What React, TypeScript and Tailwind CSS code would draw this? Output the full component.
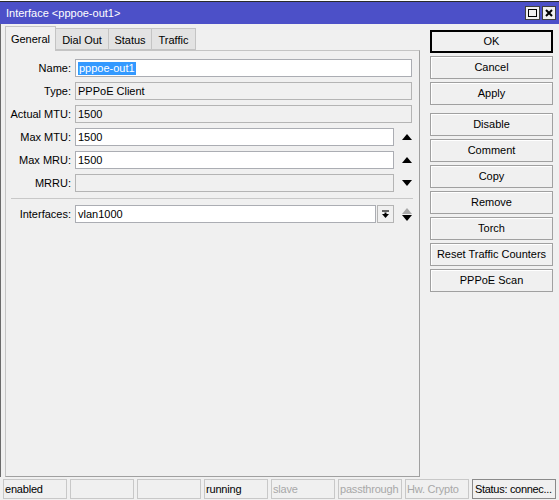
const fields = [
  { label: "Name:", value: "pppoe-out1", kind: "selected" },
  { label: "Type:", value: "PPPoE Client", kind: "readonly" },
  { label: "Actual MTU:", value: "1500", kind: "readonly" },
  { label: "Max MTU:", value: "1500", kind: "up" },
  { label: "Max MRU:", value: "1500", kind: "up" },
  { label: "MRRU:", value: "", kind: "down" },
];

const buttons = ["Disable", "Comment", "Copy", "Remove", "Torch", "Reset Traffic Counters", "PPPoE Scan"];

const statusCells = [
  { text: "enabled", dim: false },
  { text: "", dim: false },
  { text: "", dim: false },
  { text: "running", dim: false },
  { text: "slave", dim: true },
  { text: "passthrough", dim: true },
  { text: "Hw. Crypto", dim: true },
];

const UpArrow = ({ color = "#000" }: { color?: string }) => (
  <svg width="10" height="6" viewBox="0 0 10 6">
    <path d="M0 6 L5 0 L10 6 Z" fill={color} />
  </svg>
);

const DownArrow = () => (
  <svg width="10" height="6" viewBox="0 0 10 6">
    <path d="M0 0 L10 0 L5 6 Z" fill="#000" />
  </svg>
);

const Button = ({ label, def }: { label: string; def?: boolean }) => (
  <div
    className={`h-[23px] w-[123px] flex items-center justify-center bg-[#f0f0f0] ${
      def ? "border-2 border-black" : "border border-[#a0a0a0] shadow-[inset_1px_1px_0_#ffffff]"
    }`}
  >
    {label}
  </div>
);

export default function App() {
  return (
    <div
      className="w-[559px] h-[500px] bg-[#f0f0f0] flex flex-col text-[11px] text-black overflow-hidden"
      style={{ fontFamily: '"Liberation Sans", Arial, sans-serif' }}
    >
      <div className="h-[1px] bg-white" />
      <div className="h-[1px] bg-[#2a2a2a]" />
      {/* Title bar */}
      <div className="h-[22px] bg-[#4c50c8] flex items-center justify-between pl-[6px] pr-[3px]">
        <span className="text-white text-[11px]">Interface &lt;pppoe-out1&gt;</span>
        <div className="flex gap-[2px]">
          <div className="w-[15px] h-[14px] bg-[#f0f0f0] border border-[#404040] flex items-center justify-center">
            <div className="w-[9px] h-[8px] border border-black" />
          </div>
          <div className="w-[14px] h-[14px] bg-[#f0f0f0] border border-[#404040] flex items-center justify-center">
            <svg width="8" height="8" viewBox="0 0 8 8">
              <path d="M1 1 L7 7 M7 1 L1 7" stroke="#000" strokeWidth="2" />
            </svg>
          </div>
        </div>
      </div>

      {/* Main */}
      <div className="flex h-[453px] border-l border-[#6a6a6a]">
        <div className="ml-[4px] w-[415px] flex flex-col">
          {/* Tabs */}
          <div className="h-[26px] flex items-end">
            <div className="h-[25px] w-[51px] -mb-[1px] relative z-10 bg-[#f0f0f0] border border-b-0 border-[#c4c4c4] flex items-center justify-center pt-[1px]">
              General
            </div>
            <div className="h-[22px] w-[53px] bg-[#e3e3e3] border border-[#c4c4c4] border-l-0 flex items-center justify-center pt-[3px]">
              Dial Out
            </div>
            <div className="h-[22px] w-[43px] bg-[#e3e3e3] border border-[#c4c4c4] border-l-0 flex items-center justify-center pt-[3px]">
              Status
            </div>
            <div className="h-[22px] w-[44px] bg-[#e3e3e3] border border-[#c4c4c4] border-l-0 flex items-center justify-center pt-[3px]">
              Traffic
            </div>
          </div>
          {/* Panel */}
          <div className="h-[427px] border border-[#c4c4c4] border-r-[#a0a0a0] border-b-[#a0a0a0] pt-[8px] flex flex-col">
            <div className="flex flex-col gap-[5px]">
              {fields.map((f) => (
                <div key={f.label} className="flex items-center h-[18px]">
                  <div className="w-[65px] text-right">{f.label}</div>
                  <div className="w-[4px]" />
                  <div
                    className={`h-[18px] border flex items-center pl-[2px] ${
                      f.kind === "selected" || f.kind === "up"
                        ? "bg-white border-[#abadb3]"
                        : "bg-[#f0f0f0] border-[#b4b4b4]"
                    } ${f.kind === "up" || f.kind === "down" ? "w-[319px]" : "w-[337px]"}`}
                  >
                    {f.kind === "selected" ? (
                      <span className="bg-[#3399ff] text-white px-[1px] leading-[13px]">{f.value}</span>
                    ) : (
                      f.value
                    )}
                  </div>
                  {f.kind === "up" && (
                    <div className="w-[18px] flex justify-end">
                      <UpArrow />
                    </div>
                  )}
                  {f.kind === "down" && (
                    <div className="w-[18px] flex justify-end">
                      <DownArrow />
                    </div>
                  )}
                </div>
              ))}
            </div>
            <div className="mt-[6px] ml-[5px] w-[402px] h-[1px] bg-[#c8c8c8]" />
            <div className="mt-[6px] flex items-center h-[18px]">
              <div className="w-[65px] text-right">Interfaces:</div>
              <div className="w-[4px]" />
              <div className="h-[18px] w-[301px] bg-white border border-[#abadb3] flex items-center pl-[2px]">
                vlan1000
              </div>
              <div className="ml-[1px] h-[18px] w-[17px] bg-[#f0f0f0] border border-[#b4b4b4] flex items-center justify-center">
                <svg width="9" height="9" viewBox="0 0 9 9">
                  <path d="M1 1 L8 1" stroke="#000" strokeWidth="1.2" />
                  <path d="M3.5 2.5 L5.5 2.5 L5.5 4 L8 4 L4.5 8 L1 4 L3.5 4 Z" fill="#000" />
                </svg>
              </div>
              <div className="w-[18px] flex flex-col items-end gap-[1px]">
                <UpArrow color="#a8a8a8" />
                <DownArrow />
              </div>
            </div>
          </div>
        </div>

        {/* Right buttons */}
        <div className="ml-[10px] pt-[6px] flex flex-col gap-[3px]">
          <Button label="OK" def />
          <Button label="Cancel" />
          <Button label="Apply" />
          <div className="h-[2px]" />
          {buttons.map((b) => (
            <Button key={b} label={b} />
          ))}
        </div>
      </div>

      {/* Status bar */}
      <div className="h-[23px] pt-[2px] pl-[3px] flex gap-[3px]">
        {statusCells.map((c, i) => (
          <div
            key={i}
            className={`h-[20px] w-[64px] border border-[#c8c8c8] flex items-center pl-[1px] whitespace-nowrap overflow-hidden tracking-[-0.2px] ${
              c.dim ? "text-[#a8a8a8]" : "text-black"
            }`}
          >
            {c.text}
          </div>
        ))}
        <div className="h-[20px] w-[84px] border border-[#8a8a8a] flex items-center pl-[2px] whitespace-nowrap overflow-hidden tracking-[-0.3px]">
          Status: connec...
        </div>
      </div>
    </div>
  );
}
